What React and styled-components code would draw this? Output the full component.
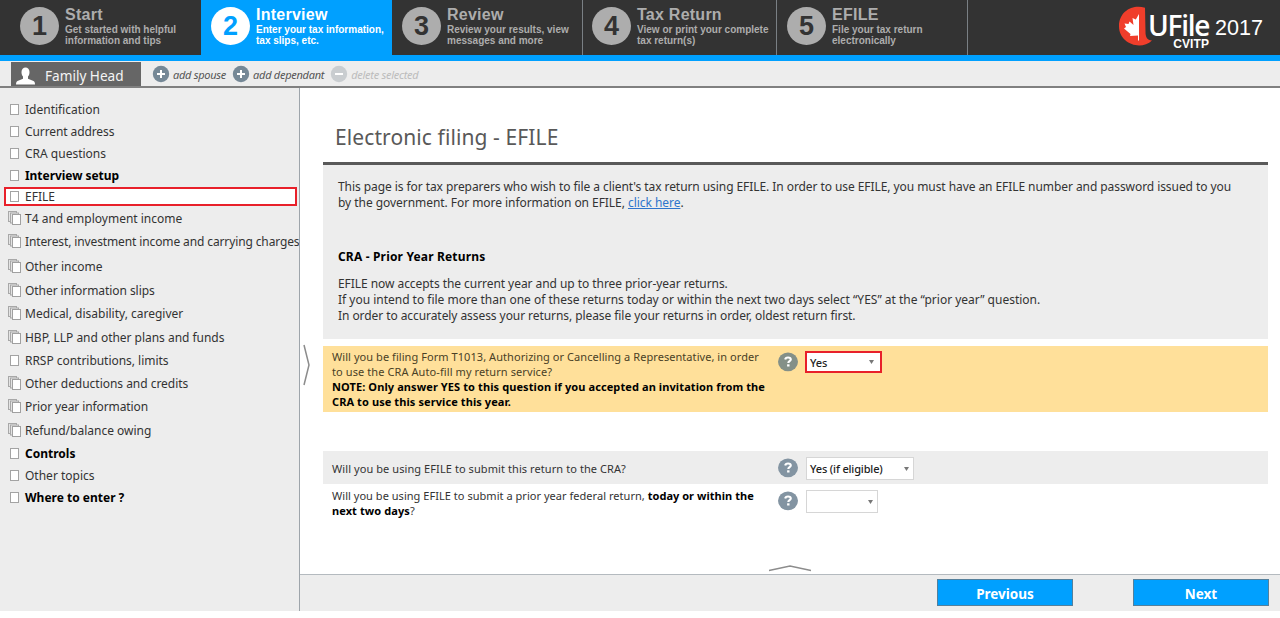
import React from "react";
import styled, { createGlobalStyle, css } from "styled-components";

const Global = createGlobalStyle`
  * { box-sizing: border-box; }
  body { margin: 0; background: #fff; font-family: "Noto Sans", "Open Sans", sans-serif; color: #333; overflow: hidden; }
`;

const Page = styled.div`
  width: 1280px;
  height: 618px;
  display: flex;
  flex-direction: column;
  padding-bottom: 7px;
`;

const Header = styled.header`
  height: 61px;
  flex: none;
  display: flex;
  justify-content: space-between;
  background: #333;
  border-bottom: 6px solid #00a0ff;
`;

const Steps = styled.nav`
  display: flex;
`;

const Step = styled.div`
  width: ${(p) => p.$width}px;
  padding: 7px 0 0 ${(p) => p.$inset}px;
  display: flex;
  gap: 6px;
  font-family: "Liberation Sans", Arial, sans-serif;
  font-weight: 700;
  white-space: nowrap;
  color: ${(p) => (p.$active ? "#fff" : "#adadad")};
  background: ${(p) => (p.$active ? "#00a0ff" : "#333")};
  border-right: ${(p) => (p.$divider ? "1px solid #7a8085" : "0")};
`;

const StepNumber = styled.span`
  flex: none;
  width: 39px;
  height: 38px;
  border-radius: 50%;
  display: grid;
  place-items: center;
  font-size: 27px;
  line-height: 38px;
  background: ${(p) => (p.$active ? "#fff" : "#adadad")};
  color: ${(p) => (p.$active ? "#00a0ff" : "#333")};
`;

const StepTitle = styled.div`
  font-size: 16px;
  line-height: 15px;
  letter-spacing: 0.25px;
`;

const StepText = styled.div`
  margin-top: 2px;
  font-size: 10px;
  line-height: 11px;
`;

const Brand = styled.div`
  display: flex;
  width: 162px;
  color: #fff;
`;

const BrandMark = styled.svg`
  width: 36px;
  height: 55px;
  flex: none;
`;

const BrandName = styled.div`
  display: flex;
  flex-direction: column;
  align-items: flex-end;
  width: 62px;
  margin-left: -7px;
  padding-top: 10px;
`;

const BrandWord = styled.span`
  font-family: "Open Sans", sans-serif;
  font-weight: 600;
  font-size: 28px;
  line-height: 30px;
  letter-spacing: -1.3px;
`;

const BrandSub = styled.span`
  font: 700 12px/10px "Liberation Sans", Arial, sans-serif;
  letter-spacing: 0.1px;
  margin: -1px 0 0;
`;

const BrandYear = styled.span`
  font: 400 21.6px/24px "Liberation Sans", Arial, sans-serif;
  padding: 16px 0 0 6px;
`;

const Toolbar = styled.div`
  height: 27px;
  flex: none;
  display: flex;
  align-items: center;
  background: #ededed;
  border-bottom: 2px solid #808080;
  padding-left: 11px;
`;

const PersonTab = styled.div`
  align-self: stretch;
  width: 130px;
  margin: 1px 11px 0 0;
  padding: 2px 0 0 5px;
  display: flex;
  align-items: center;
  gap: 10px;
  background: #666;
  color: #f4f4f4;
  font-size: 13.6px;
  white-space: nowrap;
  svg { width: 19px; height: 18px; margin-top: 1px; }
`;

const Action = styled.span`
  display: flex;
  align-items: center;
  gap: 3px;
  margin: 2px 6px 0 0;
  font-size: 11px;
  font-style: italic;
  letter-spacing: -0.27px;
  white-space: nowrap;
  color: ${(p) => (p.$disabled ? "#bcbcbc" : "#555")};
  svg { width: 18px; height: 18px; margin-top: -2px; }
`;

const Body = styled.div`
  flex: 1;
  display: flex;
  min-height: 0;
`;

const Sidebar = styled.aside`
  width: 300px;
  flex: none;
  padding: 11px 0 0;
  background: #ededed;
  border-right: 1px solid #9ea5ab;
  overflow: hidden;
`;

const Topic = styled.div`
  height: ${(p) => p.$height}px;
  padding-left: 8px;
  display: flex;
  align-items: center;
  gap: 3px;
  font-size: 12px;
  line-height: 16px;
  letter-spacing: ${(p) => p.$spacing || 0}px;
  white-space: nowrap;
  svg { width: 14px; height: 16px; flex: none; }
  ${(p) => p.$bold && css`font-weight: 700; color: #000;`}
  ${(p) =>
    p.$selected &&
    css`
      height: 19px;
      margin: 0 2px 2px 4px;
      padding-left: 2px;
      background: #fff;
      border: 2px solid #e8202a;
    `}
`;

const Main = styled.main`
  flex: 1;
  display: flex;
  flex-direction: column;
  min-width: 0;
`;

const Content = styled.section`
  flex: 1;
  display: flex;
  position: relative;
`;

const SideHandle = styled.svg`
  width: 8px;
  height: 42px;
  margin: 256px 15px 0 3px;
  flex: none;
`;

const BottomHandle = styled.svg`
  position: absolute;
  left: 468px;
  bottom: 2px;
  width: 44px;
  height: 7px;
`;

const Form = styled.div`
  width: 945px;
  margin-left: -3px;
`;

const Title = styled.h1`
  margin: 0;
  height: 77px;
  padding: 36px 0 0 12px;
  font-weight: 400;
  font-size: 21px;
  line-height: 26px;
  letter-spacing: 0.1px;
  color: #595959;
  border-bottom: 3px solid #595959;
`;

const Info = styled.div`
  height: 174px;
  padding: 14px 0 0 15px;
  background: #ededed;
  font-size: 12px;
  line-height: 16px;
  color: #333;
  white-space: nowrap;
`;

const Line = styled.div`
  letter-spacing: ${(p) => p.$spacing || 0}px;
  ${(p) => p.$bold && css`font-weight: 700; color: #000;`}
`;

const InfoHeading = styled.div`
  margin: 38px 0 11px;
  font-weight: 700;
  color: #000;
  letter-spacing: 0.17px;
`;

const Link = styled.a`
  color: #2f75cc;
  text-decoration: underline;
`;

const Question = styled.div`
  display: flex;
  align-items: flex-start;
  height: ${(p) => p.$height}px;
  margin-top: ${(p) => p.$gap || 0}px;
  padding: ${(p) => p.$top}px 0 0 9px;
  background: ${(p) => p.$fill || "transparent"};
`;

const QuestionText = styled.div`
  width: 446px;
  margin-top: ${(p) => p.$offset || 0}px;
  font-size: 11px;
  line-height: 15px;
  color: ${(p) => (p.$warm ? "#4a4126" : "#333")};
  white-space: nowrap;
  b { color: #000; }
`;

const Help = styled.svg`
  width: 20px;
  height: 20px;
  margin: 1px ${(p) => (p.$warm ? 7 : 8)}px 0 0;
  flex: none;
`;

const Select = styled.div`
  width: ${(p) => p.$width}px;
  height: ${(p) => (p.$flagged ? 22 : 23)}px;
  display: flex;
  align-items: center;
  justify-content: space-between;
  padding: 0 ${(p) => (p.$flagged ? 6 : 4)}px 0 3px;
  font-size: 11px;
  font-weight: 500;
  letter-spacing: -0.15px;
  color: #222;
  white-space: nowrap;
  background: #fff;
  border: ${(p) => (p.$flagged ? "2px solid #e8202a" : "1px solid #d6d6d6")};
  svg { width: 5px; height: 4px; }
`;

const Footer = styled.footer`
  height: 37px;
  flex: none;
  display: flex;
  justify-content: flex-end;
  gap: 60px;
  padding: 4px 11px 0 0;
  background: #ededed;
  border-top: 1px solid #b4babf;
`;

const Button = styled.button`
  width: 136px;
  height: 27px;
  padding: 2px 0 0;
  border: 1px solid #54809c;
  background: #00a0ff;
  color: #fff;
  font: 700 13.5px/20px "Noto Sans", sans-serif;
`;

const RoundIcon = ({ minus }) => (
  <svg viewBox="0 0 18 18">
    <circle cx="9" cy="9" r="8.2" fill={minus ? "#c9cdd0" : "#758896"} />
    <path d={minus ? "M5 9h8" : "M5 9h8M9 5v8"} stroke="#fff" strokeWidth="2" />
  </svg>
);

const PageIcon = () => (
  <svg viewBox="0 0 14 16">
    <rect x="2.5" y="2.5" width="8" height="10" fill="#fff" stroke="#a3a3a3" />
  </svg>
);

const StackIcon = () => (
  <svg viewBox="0 0 14 16">
    <rect x="0.5" y="0.5" width="8" height="10" fill="#e4e4e4" stroke="#a8a8a8" />
    <rect x="2.5" y="2" width="8" height="10" fill="#e4e4e4" stroke="#a8a8a8" />
    <rect x="4.5" y="3.5" width="8" height="10" fill="#fff" stroke="#a0a0a0" />
  </svg>
);

const HelpIcon = ({ warm }) => (
  <Help viewBox="0 0 20 20" $warm={warm}>
    <ellipse cx="10" cy="9.8" rx="10" ry="9.4" fill={warm ? "#849088" : "#8394a2"} />
    <path d="M7.2 7.5C7.400 6 8.500 5.500 10 5.500c1.700 0 2.800.6 2.800 1.900 0 1.700-2.500 1.700-2.500 3.600" fill="none" stroke="#fff" strokeWidth="2.1" />
    <rect x="9.1" y="12.300" width="2.400" height="2.200" fill="#fff" />
  </Help>
);

const Arrow = () => (
  <svg viewBox="0 0 5 4">
    <path d="M0 0h5L2.5 4z" fill="#777" />
  </svg>
);

const steps = [
  { n: 1, title: "Start", text: ["Get started with helpful", "information and tips"], width: 201, inset: 20 },
  { n: 2, title: "Interview", text: ["Enter your tax information,", "tax slips, etc."], width: 191, inset: 10, active: true },
  { n: 3, title: "Review", text: ["Review your results, view", "messages and more"], width: 191, inset: 10, divider: true },
  { n: 4, title: "Tax Return", text: ["View or print your complete", "tax return(s)"], width: 194, inset: 9, divider: true },
  { n: 5, title: "EFILE", text: ["File your tax return", "electronically"], width: 191, inset: 10, divider: true },
];

const topics = [
  { label: "Identification", h: 22 },
  { label: "Current address", h: 22, spacing: -0.1 },
  { label: "CRA questions", h: 22 },
  { label: "Interview setup", h: 22, bold: true, spacing: -0.05 },
  { label: "EFILE", h: 21, selected: true },
  { label: "T4 and employment income", h: 21, stack: true },
  { label: "Interest, investment income and carrying charges", h: 26, stack: true, spacing: -0.12 },
  { label: "Other income", h: 24, stack: true },
  { label: "Other information slips", h: 23, stack: true, spacing: -0.06 },
  { label: "Medical, disability, caregiver", h: 24, stack: true },
  { label: "HBP, LLP and other plans and funds", h: 24, stack: true, spacing: -0.03 },
  { label: "RRSP contributions, limits", h: 22, spacing: -0.03 },
  { label: "Other deductions and credits", h: 24, stack: true, spacing: -0.03 },
  { label: "Prior year information", h: 22, stack: true, spacing: -0.1 },
  { label: "Refund/balance owing", h: 25, stack: true },
  { label: "Controls", h: 22, bold: true },
  { label: "Other topics", h: 22 },
  { label: "Where to enter ?", h: 22, bold: true },
];

export default function App() {
  return (
    <Page>
      <Global />
      <Header>
        <Steps>
          {steps.map((s) => (
            <Step key={s.n} $width={s.width} $inset={s.inset} $active={s.active} $divider={s.divider}>
              <StepNumber $active={s.active}>{s.n}</StepNumber>
              <div>
                <StepTitle>{s.title}</StepTitle>
                <StepText>
                  {s.text[0]}
                  <br />
                  {s.text[1]}
                </StepText>
              </div>
            </Step>
          ))}
        </Steps>
        <Brand>
          <BrandMark viewBox="0 0 36 55">
            <path d="M27 7.800C15 4 1 11 1 26.300C1 44 23 51 34 40.500C29 40 27.500 37 27.500 32Z" fill="#f03e2b" />
            <path d="M21 14L17.800 19.500L14.500 18L15.500 25L11.500 21.500L10.500 24L6.500 23.500L8 27L6 28.500L12.500 34L12 36L20 35.500L20 40.500H21Z" fill="#fff" />
          </BrandMark>
          <BrandName>
            <BrandWord>UFile</BrandWord>
            <BrandSub>CVITP</BrandSub>
          </BrandName>
          <BrandYear>2017</BrandYear>
        </Brand>
      </Header>
      <Toolbar>
        <PersonTab>
          <svg viewBox="0 0 19 18">
            <path d="M5.500 5a4 4.500 0 0 1 8 0c0 2-.6 3.500-1.500 4.600v2.200l5.500 2.200c1 .5 1.500 1.500 1.500 3.500H0c0-2 .5-3 1.500-3.500L7 11.800V9.600C6.100 8.500 5.500 7 5.500 5z" fill="#fff" />
          </svg>
          Family Head
        </PersonTab>
        <Action><RoundIcon />add spouse</Action>
        <Action><RoundIcon />add dependant</Action>
        <Action $disabled><RoundIcon minus />delete selected</Action>
      </Toolbar>
      <Body>
        <Sidebar>
          {topics.map((t) => (
            <Topic key={t.label} $height={t.h} $bold={t.bold} $selected={t.selected} $spacing={t.spacing}>
              {t.stack ? <StackIcon /> : <PageIcon />}
              {t.label}
            </Topic>
          ))}
        </Sidebar>
        <Main>
          <Content>
            <SideHandle viewBox="0 0 8 42">
              <path d="M1 1L6 21L1 41" fill="none" stroke="#8c8c8c" strokeWidth="1.5" />
            </SideHandle>
            <Form>
              <Title>Electronic filing - EFILE</Title>
              <Info>
                <Line $spacing={-0.07}>This page is for tax preparers who wish to file a client's tax return using EFILE. In order to use EFILE, you must have an EFILE number and password issued to you</Line>
                <Line $spacing={-0.05}>by the government. For more information on EFILE, <Link>click here</Link>.</Line>
                <InfoHeading>CRA - Prior Year Returns</InfoHeading>
                <Line $spacing={-0.055}>EFILE now accepts the current year and up to three prior-year returns.</Line>
                <Line $spacing={-0.01}>If you intend to file more than one of these returns today or within the next two days select “YES” at the “prior year” question.</Line>
                <Line $spacing={-0.07}>In order to accurately assess your returns, please file your returns in order, oldest return first.</Line>
              </Info>
              <Question $height={66} $gap={7} $top={5} $fill="#ffe09a">
                <QuestionText $warm $offset={-2}>
                  <Line $spacing={0.06}>Will you be filing Form T1013, Authorizing or Cancelling a Representative, in order</Line>
                  <Line $spacing={0.09}>to use the CRA Auto-fill my return service?</Line>
                  <Line $bold $spacing={0.1}>NOTE: Only answer YES to this question if you accepted an invitation from the</Line>
                  <Line $bold $spacing={0.09}>CRA to use this service this year.</Line>
                </QuestionText>
                <HelpIcon warm />
                <Select $width={77} $flagged>Yes<Arrow /></Select>
              </Question>
              <Question $height={33} $gap={39} $top={6} $fill="#ededed">
                <QuestionText $offset={4}>
                  <Line $spacing={0.08}>Will you be using EFILE to submit this return to the CRA?</Line>
                </QuestionText>
                <HelpIcon />
                <Select $width={108}>Yes (if eligible)<Arrow /></Select>
              </Question>
              <Question $height={33} $top={6}>
                <QuestionText $offset={-2}>
                  <Line $spacing={0.035}>Will you be using EFILE to submit a prior year federal return, <b>today or within the</b></Line>
                  <Line $spacing={0.09}><b>next two days</b>?</Line>
                </QuestionText>
                <HelpIcon />
                <Select $width={72}><span /><Arrow /></Select>
              </Question>
            </Form>
            <BottomHandle viewBox="0 0 44 7">
              <path d="M1 5.500L22 1L43 5.500" fill="none" stroke="#8c8c8c" strokeWidth="1.300" />
            </BottomHandle>
          </Content>
          <Footer>
            <Button>Previous</Button>
            <Button>Next</Button>
          </Footer>
        </Main>
      </Body>
    </Page>
  );
}
